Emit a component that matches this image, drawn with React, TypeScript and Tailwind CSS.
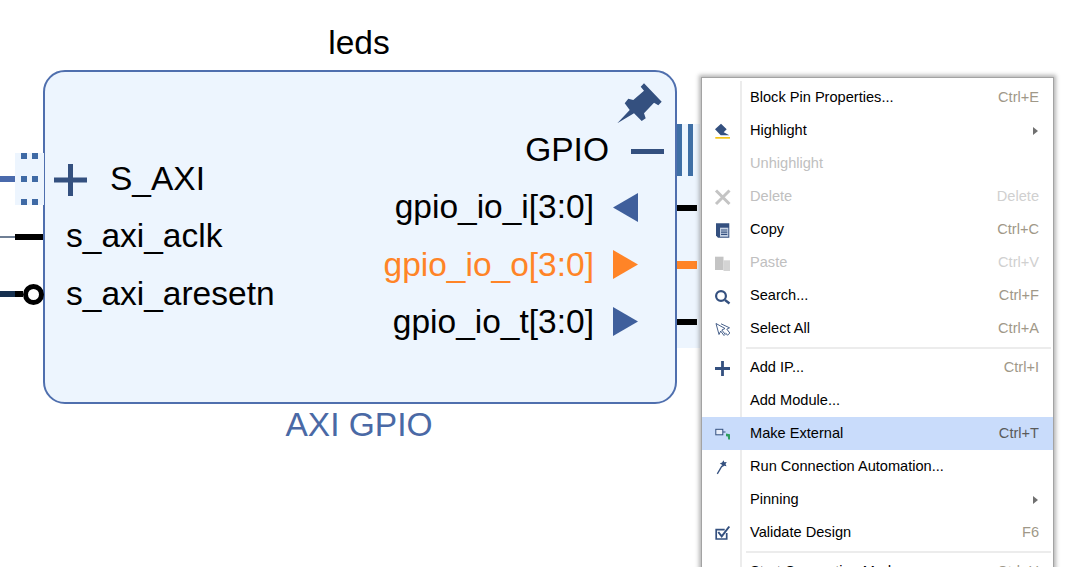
import type { ReactNode } from 'react'

const BLUE = '#3f5f9c'
const NAVY = '#34507f'

type MenuRow = {
  label?: string
  shortcut?: string
  disabled?: boolean
  active?: boolean
  submenu?: boolean
  separator?: boolean
  icon?: ReactNode
}

function Svg({ children }: { children: ReactNode }) {
  return (
    <svg width="20" height="20" viewBox="0 0 20 20" className="block">
      {children}
    </svg>
  )
}

const menuRows: MenuRow[] = [
  { label: 'Block Pin Properties...', shortcut: 'Ctrl+E' },
  {
    label: 'Highlight',
    submenu: true,
    icon: (
      <Svg>
        <path d="M2 8.300 8 2.700l5.700 5.600-3 3 5.600 3H7.700z" fill={NAVY} />
        <rect x="2.300" y="16" width="14.700" height="1.700" fill="#f5c518" />
      </Svg>
    ),
  },
  { label: 'Unhighlight', disabled: true },
  {
    label: 'Delete',
    shortcut: 'Delete',
    disabled: true,
    icon: (
      <Svg>
        <path d="M3 3.500 16.500 17M16.500 3.500 3 17" stroke="#c4c4c4" strokeWidth="3" />
      </Svg>
    ),
  },
  {
    label: 'Copy',
    shortcut: 'Ctrl+C',
    icon: (
      <Svg>
        <path d="M3 3.300h13.300v14.400H5L3 15.500z" fill={NAVY} />
        <rect x="7" y="7.700" width="8.300" height="9" fill="#c9d5e6" />
        <path d="M8 10h6.300M8 12.200h6.300M8 14.400h6.300" stroke={NAVY} strokeWidth="1.200" />
      </Svg>
    ),
  },
  {
    label: 'Paste',
    shortcut: 'Ctrl+V',
    disabled: true,
    icon: (
      <Svg>
        <rect x="2" y="3.700" width="8.500" height="13.300" fill="#c4c4c4" />
        <rect x="10.500" y="7.300" width="6.500" height="10.700" fill="#d4d4d4" />
      </Svg>
    ),
  },
  {
    label: 'Search...',
    shortcut: 'Ctrl+F',
    icon: (
      <Svg>
        <circle cx="8" cy="10" r="4.900" fill="none" stroke={NAVY} strokeWidth="2.200" />
        <path d="m12 14 4.500 3.500" stroke={NAVY} strokeWidth="2.400" />
      </Svg>
    ),
  },
  {
    label: 'Select All',
    shortcut: 'Ctrl+A',
    icon: (
      <Svg>
        <path d="m3 4.500 3 11 1.700-3.400 3.300 4.400 1.200-1.200-3.400-4.300 3.200-1.500z" fill="none" stroke={NAVY} strokeWidth="0.900" />
        <path d="m8 4.800 8.500 4-2.700 1.400 3 3.800-2.300 2.300-2-2.500" fill="none" stroke={NAVY} strokeWidth="0.900" />
      </Svg>
    ),
  },
  { separator: true },
  {
    label: 'Add IP...',
    shortcut: 'Ctrl+I',
    icon: (
      <Svg>
        <path d="M2 10.500h15M9.500 3v15" stroke={NAVY} strokeWidth="2.800" />
      </Svg>
    ),
  },
  { label: 'Add Module...' },
  {
    label: 'Make External',
    shortcut: 'Ctrl+T',
    active: true,
    icon: (
      <Svg>
        <rect x="2.800" y="5.300" width="7" height="5.500" fill="#e8eefa" stroke={NAVY} strokeWidth="1" />
        <path d="M10 8h2.500" stroke={NAVY} strokeWidth="1" />
        <path d="m13 9.500 4 .8v5.200h-1.800l-.4-3-1.800-.2z" fill="#2f9e5f" />
      </Svg>
    ),
  },
  {
    label: 'Run Connection Automation...',
    icon: (
      <Svg>
        <path d="m4.300 16.800 4.700-8" stroke={NAVY} strokeWidth="1.300" />
        <path d="m10.500 3.300.8 2 2.500-.3-1.300 2.100 1 2.200-2.300-.5-1.900 1.400-.3-2.400-2.200-1.200 2.300-1z" fill={NAVY} />
      </Svg>
    ),
  },
  { label: 'Pinning', submenu: true },
  {
    label: 'Validate Design',
    shortcut: 'F6',
    icon: (
      <Svg>
        <path d="M13.700 10v6H3.200V6.600h8.500" fill="none" stroke={NAVY} strokeWidth="1.700" />
        <path d="m5.300 9 3.400 4.300 7.600-9.800" fill="none" stroke={NAVY} strokeWidth="2" />
      </Svg>
    ),
  },
  { separator: true },
  { label: 'Start Connection Mode', shortcut: 'Ctrl+U' },
]

function ContextMenu() {
  return (
    <div className="absolute left-[701px] top-[77px] w-[353px] border border-[#a3a3a3] bg-white pt-[3px] text-[14.6px] shadow-[0_0_4px_2px_rgba(90,90,90,0.45)]">
      <div className="absolute bottom-0 left-[38px] top-[3px] w-[2px] bg-[#ececec]" />
      {menuRows.map((row, idx) =>
        row.separator ? (
          <div key={idx} className="flex h-[6px] items-center pl-[44px] pr-[2px]">
            <div className="h-[2px] w-full bg-[#ececec]" />
          </div>
        ) : (
          <div
            key={idx}
            className={`relative flex h-[33px] items-center ${row.active ? 'bg-[#c9dcfb]' : ''}`}
          >
            <div className="flex w-[48px] justify-center pr-[6px]">{row.icon}</div>
            <span className={row.disabled ? 'text-[#c0c0c0]' : 'text-black'}>{row.label}</span>
            {row.shortcut && (
              <span
                className={`ml-auto mr-[14px] ${
                  row.disabled ? 'text-[#d0d0d0]' : row.active ? 'text-[#5a5a5a]' : 'text-[#a09888]'
                }`}
              >
                {row.shortcut}
              </span>
            )}
            {row.submenu && (
              <div className="ml-auto mr-[15px] h-0 w-0 border-y-[4px] border-l-[5px] border-y-transparent border-l-[#707070]" />
            )}
          </div>
        )
      )}
    </div>
  )
}

function Triangle({ dir, color }: { dir: 'left' | 'right'; color: string }) {
  return (
    <svg width="25" height="29" viewBox="0 0 25 29" className="shrink-0">
      <path d={dir === 'left' ? 'M0 14.500 25 0v29z' : 'M0 0l25 14.500L0 29z'} fill={color} />
    </svg>
  )
}

function LeftStubs() {
  return (
    <div className="relative z-10 flex flex-col pt-[80px]">
      <div className="flex h-[58px] items-center">
        <div className="h-[6px] w-[15px] bg-[#4a6aac]" />
        <div className="grid h-[52px] w-[30px] grid-cols-[6px_6px] content-between gap-x-[5px] bg-[#edf5fe] pl-[6px]">
          {[0, 1, 2, 3, 4, 5].map((i) => (
            <div key={i} className="h-[6px] w-[6px] bg-[#3f6aa5]" />
          ))}
        </div>
      </div>
      <div className="flex h-[57px] items-center">
        <div className="h-[2px] w-[15px] bg-[#6f7f95]" />
        <div className="h-[6px] w-[28px] bg-black" />
      </div>
      <div className="flex h-[58px] items-center">
        <div className="h-[6px] w-[15px] bg-[#16304f]" />
        <div className="h-[6px] w-[8px] bg-black" />
        <div className="h-[21px] w-[21px] shrink-0 rounded-full border-[5px] border-black bg-white" />
      </div>
    </div>
  )
}

function RightStubs() {
  return (
    <div className="mt-[54px] flex h-[224px] w-[23px] flex-col bg-[#edf5fe]">
      <div className="flex h-[52px] gap-[6px]">
        <div className="w-[5px] bg-[#3f6fa5]" />
        <div className="w-[5px] bg-[#3f6fa5]" />
      </div>
      <div className="mt-[29px] h-[6px] w-[20px] bg-black" />
      <div className="mt-[50px] h-[8px] w-[20px] bg-[#ff8427]" />
      <div className="mt-[50px] h-[6px] w-[20px] bg-black" />
    </div>
  )
}

function Block() {
  return (
    <div className="relative flex h-[334px] justify-between rounded-[22px] border-2 border-[#4f6fae] bg-[#edf5fe] text-black">
      {/* pin */}
      <svg width="46" height="42" viewBox="0 0 46 42" className="absolute right-[12px] top-[11px]">
        <path
          d="M.3 40.300 12.700 27l-5-6.700 3.600-4.600 5 1.300L27 7.700l-3.300-4L27 .3l17.700 18.400-3.400 3.600-4.300-2.600-10 10.600 1.700 5-4 2.700L17 30.300z"
          fill={NAVY}
        />
      </svg>

      <div className="flex flex-col pl-[21px] pt-[78px]">
        <div className="-ml-[12px] flex h-[58px] items-center gap-[23px]">
          <svg width="33" height="32" viewBox="0 0 33 32" className="mt-[2px]">
            <path d="M0 16h33M16.500 0v32" stroke={NAVY} strokeWidth="5" />
          </svg>
          <span>S_AXI</span>
        </div>
        <div className="flex h-[56px] items-center">s_axi_aclk</div>
        <div className="flex h-[59px] items-center">s_axi_aresetn</div>
      </div>

      <div className="flex flex-col pt-[49px]">
        <div className="flex h-[57px] items-center justify-end gap-[22px] pr-[11px]">
          <span>GPIO</span>
          <div className="mt-[4px] h-[5px] w-[33px] bg-[#34507f]" />
        </div>
        <div className="flex h-[58px] items-center justify-end gap-[19px] pr-[37px]">
          <span>gpio_io_i[3:0]</span>
          <Triangle dir="left" color={BLUE} />
        </div>
        <div className="flex h-[57px] items-center justify-end gap-[19px] pr-[37px]">
          <span className="text-[#ff8427]">gpio_io_o[3:0]</span>
          <Triangle dir="right" color="#ff8427" />
        </div>
        <div className="flex h-[57px] items-center justify-end gap-[19px] pr-[37px]">
          <span>gpio_io_t[3:0]</span>
          <Triangle dir="right" color={BLUE} />
        </div>
      </div>
    </div>
  )
}

export default function App() {
  return (
    <div className="relative h-[567px] w-[1082px] overflow-hidden bg-white font-['Liberation_Sans',Arial,sans-serif] text-[33.5px] leading-none">
      <div className="grid grid-cols-[43px_634px_23px] grid-rows-[70px_334px_auto]">
        <div className="col-start-2 pr-[2px] pt-[26px] text-center text-black">leds</div>
        <div className="col-start-1 row-start-2 w-[44px]">
          <LeftStubs />
        </div>
        <div className="col-start-2 row-start-2">
          <Block />
        </div>
        <div className="col-start-3 row-start-2">
          <RightStubs />
        </div>
        <div className="col-start-2 row-start-3 pr-[2px] pt-[4px] text-center text-[#4a69a5]">AXI GPIO</div>
      </div>

      <ContextMenu />
    </div>
  )
}
